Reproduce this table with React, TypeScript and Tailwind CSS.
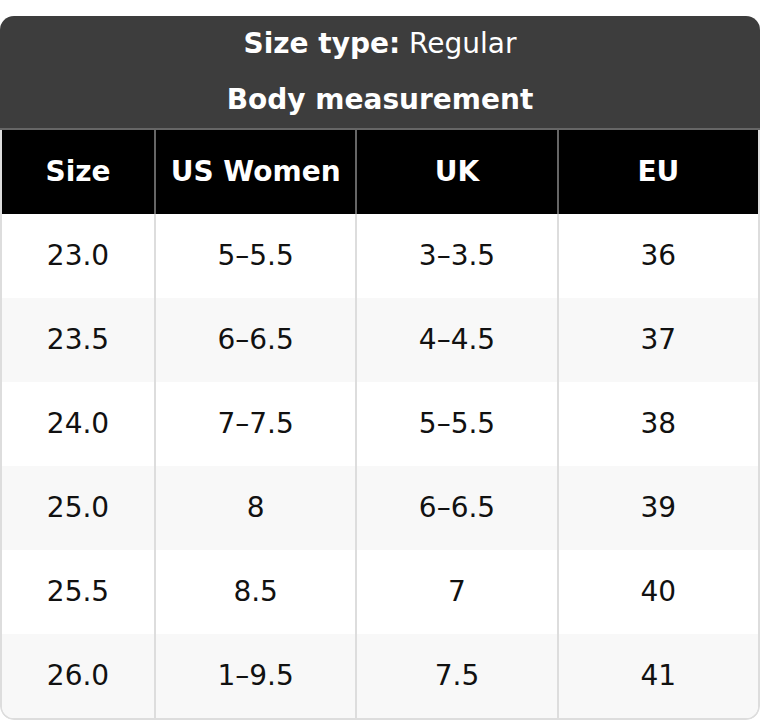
import React from 'react';

const rows = [
  ['23.0', '5–5.5', '3–3.5', '36'],
  ['23.5', '6–6.5', '4–4.5', '37'],
  ['24.0', '7–7.5', '5–5.5', '38'],
  ['25.0', '8', '6–6.5', '39'],
  ['25.5', '8.5', '7', '40'],
  ['26.0', '1–9.5', '7.5', '41'],
];

const headers = ['Size', 'US Women', 'UK', 'EU'];

const App = () => {
  return (
    <div className="w-[760px] h-[720px] bg-white pt-[16px] font-['DejaVu_Sans',sans-serif] text-[28px]">
      <div className="rounded-[14px] overflow-hidden">
        <div className="bg-[#3d3d3d] text-white text-center border-b-2 border-[#666]">
          <div className="h-[56px] flex items-center justify-center">
            <span className="font-bold">Size type:</span>&nbsp;Regular
          </div>
          <div className="h-[56px] flex items-center justify-center font-bold">Body measurement</div>
        </div>

        <div className="border-x-2 border-b-2 border-[#ddd] rounded-b-[14px] overflow-hidden">
          <div className="grid grid-cols-[152px_1fr_1fr_1fr] bg-black text-white font-bold h-[84px]">
            {headers.map((h, i) => (
              <div
                key={h}
                className={`flex items-center justify-center ${i > 0 ? 'border-l-2 border-[#666]' : ''}`}
              >
                {h}
              </div>
            ))}
          </div>
          {rows.map((r, ri) => (
            <div
              key={ri}
              className={`grid grid-cols-[152px_1fr_1fr_1fr] h-[84px] text-[#111] ${ri % 2 === 1 ? 'bg-[#f8f8f8]' : 'bg-white'}`}
            >
              {r.map((c, ci) => (
                <div
                  key={ci}
                  className={`flex items-center justify-center ${ci > 0 ? 'border-l-2 border-[#ddd]' : ''}`}
                >
                  {c}
                </div>
              ))}
            </div>
          ))}
        </div>
      </div>
    </div>
  );
};

export default App;
